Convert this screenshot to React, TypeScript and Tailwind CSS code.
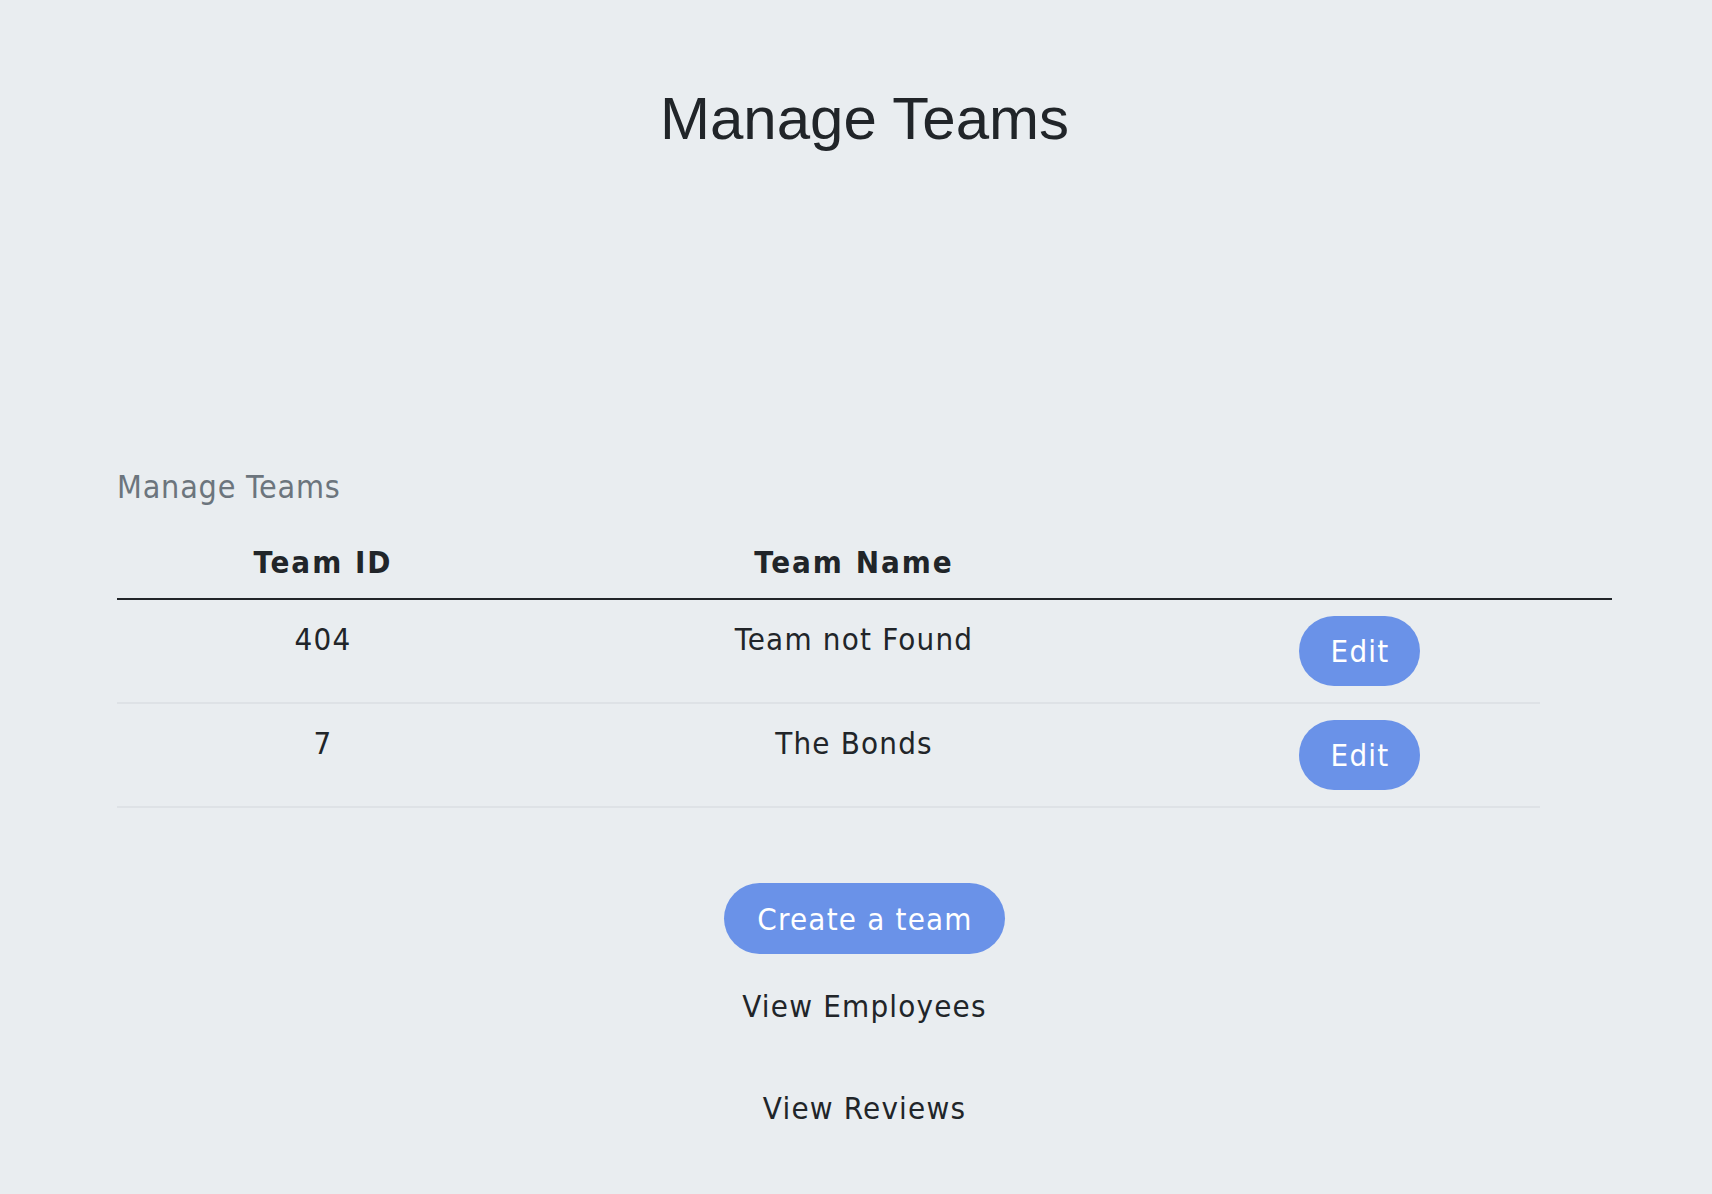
import React from 'react'

const teams = [
  { id: '404', name: 'Team not Found' },
  { id: '7', name: 'The Bonds' },
]

export default function App() {
  return (
    <div className="min-h-screen bg-[#e9edf0] text-[#212529] font-['DejaVu_Sans_Condensed','DejaVu_Sans',sans-serif]">
      <div className="pl-[117px] pr-[100px] pt-[89px] pb-10">
        <h1 className="text-center text-[60px] leading-[60px] font-['Liberation_Sans',Arial,sans-serif] font-normal">
          Manage Teams
        </h1>

        <table className="mt-[314px] w-full table-fixed border-collapse">
          <caption className="caption-top text-left text-[32px] leading-[48px] tracking-[0.8px] text-[#6c757d] pb-3">
            Manage Teams
          </caption>
          <colgroup>
            <col className="w-[412px]" />
            <col className="w-[650px]" />
            <col className="w-[361px]" />
            <col className="w-[72px]" />
          </colgroup>
          <thead>
            <tr className="border-b-2 border-[#212529]">
              <th className="pt-4 pb-[13px] text-[31px] leading-[46px] tracking-[2px] font-bold text-center">Team ID</th>
              <th className="pt-4 pb-[13px] text-[31px] leading-[46px] tracking-[2px] font-bold text-center">Team Name</th>
              <th className="pt-4 pb-[13px]"></th>
              <th className="pt-4 pb-[13px]"></th>
            </tr>
          </thead>
          <tbody>
            {teams.map((team) => (
              <tr key={team.id}>
                <td className="py-4 align-top text-center text-[31px] leading-[46px] tracking-[1.2px] border-b-2 border-[#dee2e6]">
                  {team.id}
                </td>
                <td className="py-4 align-top text-center text-[31px] leading-[46px] tracking-[1.2px] border-b-2 border-[#dee2e6]">
                  {team.name}
                </td>
                <td className="py-4 align-top text-center border-b-2 border-[#dee2e6]">
                  <button className="h-[70px] pl-[32px] pr-[31px] rounded-full bg-[#6a92e8] text-white text-[31px] leading-[46px] tracking-[1.2px]">
                    Edit
                  </button>
                </td>
                <td></td>
              </tr>
            ))}
          </tbody>
        </table>

        <div className="flex flex-col items-center">
          <button className="mt-[75px] h-[71px] pl-[33px] pr-[32px] rounded-full bg-[#6a92e8] text-white text-[31px] leading-[46px] tracking-[1.2px]">
            Create a team
          </button>
          <a className="mt-[29px] text-[31px] leading-[46px] tracking-[1.2px] text-[#212529] cursor-pointer">View Employees</a>
          <a className="mt-[56px] text-[31px] leading-[46px] tracking-[1.2px] text-[#212529] cursor-pointer">View Reviews</a>
        </div>
      </div>
    </div>
  )
}
